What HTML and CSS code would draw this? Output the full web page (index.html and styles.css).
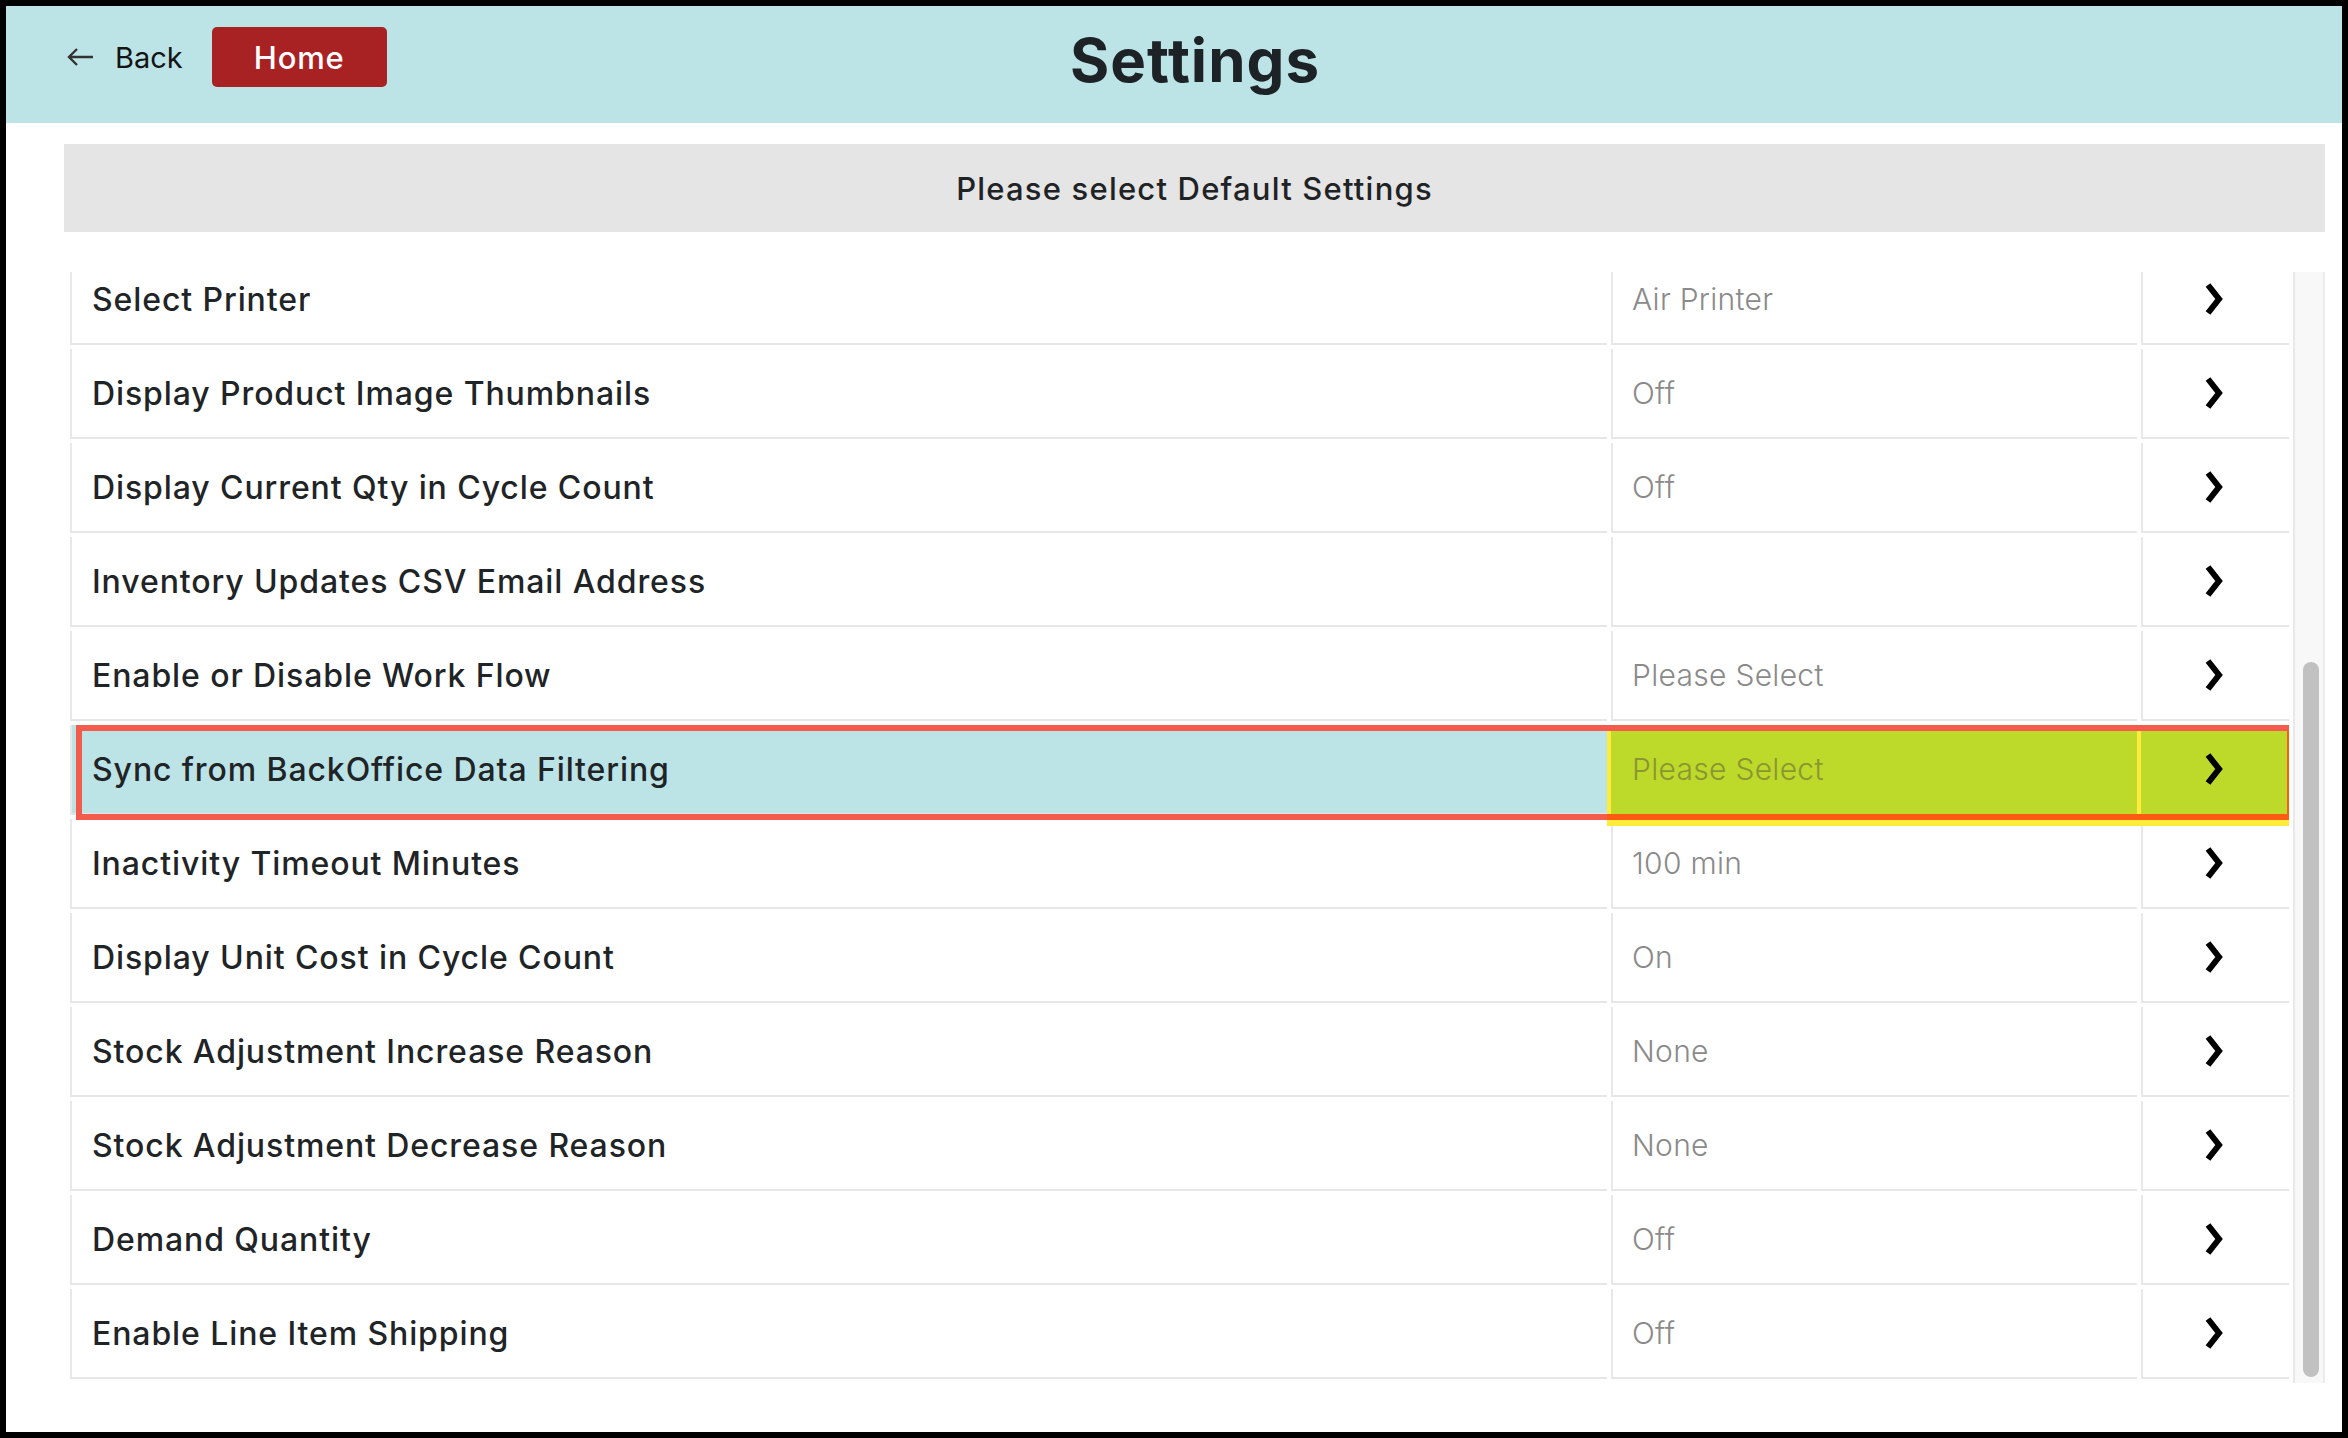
FILE: index.html
```html
<!DOCTYPE html>
<html lang="en">
<head>
<meta charset="utf-8">
<title>Settings</title>
<link rel="stylesheet" href="styles.css">
</head>
<body>
<div class="frame">
  <header class="header">
    <div class="nav">
      <a class="back">
        <svg class="back-icon" width="28" height="20" viewBox="0 0 28 20"><path d="M27 10H3M11 2L3 10L11 18" fill="none" stroke="#333" stroke-width="2.4"/></svg>
        <span>Back</span>
      </a>
      <a class="home">Home</a>
    </div>
    <h1 class="title">Settings</h1>
    <div></div>
  </header>
  <main class="main">
    <div class="band">Please select Default Settings</div>
    <div class="list-wrap">
      <div class="list">
        <div class="row"><div class="cell label">Select Printer</div><div class="cell value">Air Printer</div><div class="cell arrow"><svg width="22" height="38" viewBox="0 0 22 38"><path d="M5 5L16 19L5 33" fill="none" stroke="#000" stroke-width="6"/></svg></div></div>
        <div class="row"><div class="cell label">Display Product Image Thumbnails</div><div class="cell value">Off</div><div class="cell arrow"><svg width="22" height="38" viewBox="0 0 22 38"><path d="M5 5L16 19L5 33" fill="none" stroke="#000" stroke-width="6"/></svg></div></div>
        <div class="row"><div class="cell label">Display Current Qty in Cycle Count</div><div class="cell value">Off</div><div class="cell arrow"><svg width="22" height="38" viewBox="0 0 22 38"><path d="M5 5L16 19L5 33" fill="none" stroke="#000" stroke-width="6"/></svg></div></div>
        <div class="row"><div class="cell label">Inventory Updates CSV Email Address</div><div class="cell value"></div><div class="cell arrow"><svg width="22" height="38" viewBox="0 0 22 38"><path d="M5 5L16 19L5 33" fill="none" stroke="#000" stroke-width="6"/></svg></div></div>
        <div class="row"><div class="cell label">Enable or Disable Work Flow</div><div class="cell value">Please Select</div><div class="cell arrow"><svg width="22" height="38" viewBox="0 0 22 38"><path d="M5 5L16 19L5 33" fill="none" stroke="#000" stroke-width="6"/></svg></div></div>
        <div class="row hl"><div class="cell label">Sync from BackOffice Data Filtering</div><div class="cell value">Please Select</div><div class="cell arrow"><svg width="22" height="38" viewBox="0 0 22 38"><path d="M5 5L16 19L5 33" fill="none" stroke="#000" stroke-width="6"/></svg></div><span class="mark-y"></span><span class="mark-r"></span><span class="mark-o"></span></div>
        <div class="row"><div class="cell label">Inactivity Timeout Minutes</div><div class="cell value">100 min</div><div class="cell arrow"><svg width="22" height="38" viewBox="0 0 22 38"><path d="M5 5L16 19L5 33" fill="none" stroke="#000" stroke-width="6"/></svg></div></div>
        <div class="row"><div class="cell label">Display Unit Cost in Cycle Count</div><div class="cell value">On</div><div class="cell arrow"><svg width="22" height="38" viewBox="0 0 22 38"><path d="M5 5L16 19L5 33" fill="none" stroke="#000" stroke-width="6"/></svg></div></div>
        <div class="row"><div class="cell label">Stock Adjustment Increase Reason</div><div class="cell value">None</div><div class="cell arrow"><svg width="22" height="38" viewBox="0 0 22 38"><path d="M5 5L16 19L5 33" fill="none" stroke="#000" stroke-width="6"/></svg></div></div>
        <div class="row"><div class="cell label">Stock Adjustment Decrease Reason</div><div class="cell value">None</div><div class="cell arrow"><svg width="22" height="38" viewBox="0 0 22 38"><path d="M5 5L16 19L5 33" fill="none" stroke="#000" stroke-width="6"/></svg></div></div>
        <div class="row"><div class="cell label">Demand Quantity</div><div class="cell value">Off</div><div class="cell arrow"><svg width="22" height="38" viewBox="0 0 22 38"><path d="M5 5L16 19L5 33" fill="none" stroke="#000" stroke-width="6"/></svg></div></div>
        <div class="row"><div class="cell label">Enable Line Item Shipping</div><div class="cell value">Off</div><div class="cell arrow"><svg width="22" height="38" viewBox="0 0 22 38"><path d="M5 5L16 19L5 33" fill="none" stroke="#000" stroke-width="6"/></svg></div></div>
      </div>
      <div class="track"><div class="thumb"></div></div>
    </div>
  </main>
</div>
</body>
</html>
```

FILE: styles.css
```css
html, body {
  margin: 0;
  padding: 0;
  background: #000;
}
.frame {
  margin: 6px;
  width: 2336px;
  height: 1426px;
  background: #fff;
  overflow: hidden;
  font-family: Inter, "Liberation Sans", sans-serif;
  color: #1f2427;
}
.header {
  height: 117px;
  box-sizing: border-box;
  background: #bce3e6;
  padding: 21px 18px 0 60px;
  display: grid;
  grid-template-columns: 1fr auto 1fr;
  align-items: start;
}
.nav {
  display: flex;
  align-items: center;
  height: 60px;
}
.back {
  display: flex;
  align-items: center;
  gap: 21px;
  font-size: 29px;
  font-weight: 400;
  color: #151515;
}
.back-icon {
  display: block;
}
.home {
  margin-left: 29px;
  width: 175px;
  height: 60px;
  border-radius: 5px;
  background: #a82224;
  color: #fff;
  font-size: 31px;
  font-weight: 500;
  letter-spacing: 0.8px;
  display: flex;
  align-items: center;
  justify-content: center;
}
.title {
  margin: 3px 0 0;
  font-size: 60px;
  line-height: 60px;
  font-weight: 700;
  letter-spacing: 1px;
  color: #1c2225;
}
.main {
  padding: 21px 17px 0 58px;
}
.band {
  height: 88px;
  background: #e5e5e5;
  display: flex;
  align-items: center;
  justify-content: center;
  font-size: 31px;
  font-weight: 500;
  letter-spacing: 1.2px;
  color: #1f2326;
}
.list-wrap {
  margin: 40px 0 0 6px;
  height: 1111px;
  display: grid;
  grid-template-columns: 1fr 32px;
  column-gap: 4px;
}
.list {
  overflow: hidden;
  display: flex;
  flex-direction: column;
  justify-content: flex-end;
  gap: 4px;
  padding-bottom: 4px;
}
.row {
  flex: none;
  height: 90px;
  display: grid;
  grid-template-columns: 1fr 526px 148px;
  column-gap: 4px;
}
.cell {
  box-sizing: border-box;
  border-left: 2px solid #e8e8e8;
  border-bottom: 2px solid #e6e6e6;
  display: flex;
  align-items: center;
}
.label {
  padding-left: 20px;
  font-size: 32px;
  font-weight: 540;
  letter-spacing: 0.9px;
  color: #1f2427;
}
.value {
  padding-left: 19px;
  font-size: 30px;
  font-weight: 300;
  letter-spacing: 0.3px;
  color: #8a8a8a;
}
.arrow {
  justify-content: center;
  padding-right: 4px;
}
.arrow svg {
  display: block;
}
.row.hl {
  position: relative;
  z-index: 2;
}
.hl .cell {
  position: relative;
  z-index: 1;
}
.hl .label {
  background: #bce3e6;
}
.hl .value,
.hl .arrow {
  background: #bdd92a;
  border-left-color: transparent;
  border-bottom-color: transparent;
}
.hl .value {
  color: #8a9632;
}
.mark-y {
  position: absolute;
  right: -4px;
  width: 686px;
  top: 6px;
  bottom: -11px;
  background: #ffec3a;
  z-index: 0;
}
.mark-r {
  position: absolute;
  left: 6px;
  right: -4px;
  top: 0;
  bottom: -5px;
  border: 6px solid #f35b4c;
  z-index: 3;
}
.mark-o {
  position: absolute;
  left: 1537px;
  right: -4px;
  top: 6px;
  bottom: -5px;
  border-right: 6px solid #ff5a14;
  border-bottom: 6px solid #ff5a14;
  z-index: 4;
}
.track {
  box-sizing: border-box;
  background: #f8f8f8;
  border-left: 2px solid #e9e9e9;
  border-right: 2px solid #ececec;
  display: flex;
  flex-direction: column;
  padding-bottom: 6px;
}
.thumb {
  margin-top: auto;
  margin-left: 8px;
  width: 16px;
  height: 715px;
  border-radius: 8px;
  background: #c1c1c1;
}
```
